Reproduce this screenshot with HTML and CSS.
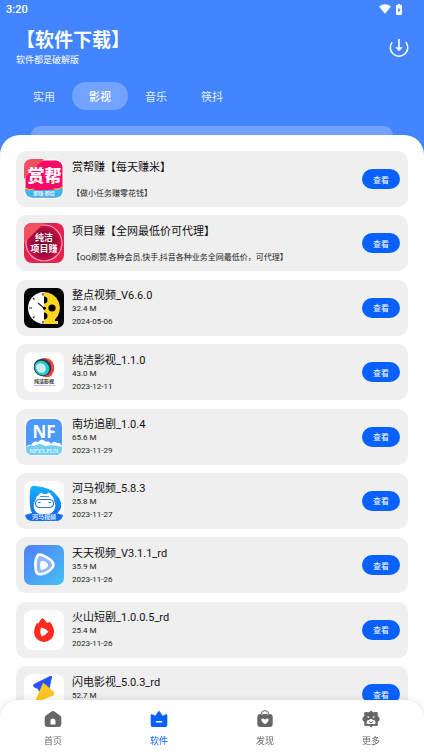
FILE: index.html
```html
<!DOCTYPE html>
<html lang="zh-CN">
<head>
<meta charset="utf-8">
<meta name="viewport" content="width=device-width, initial-scale=1">
<title>软件下载</title>
<link rel="stylesheet" href="styles.css">
</head>
<body>
<div class="app">
  <header class="header">
    <div class="status">
      <span>3:20</span>
      <div class="status-icons">
        <svg width="12" height="10" viewBox="0 0 12 10"><path d="M0 2.6Q6-2 12 2.6L6 9.8Z" fill="#fff"/></svg>
        <svg width="6" height="11" viewBox="0 0 6 11"><path d="M1.8 0h2.4v1H5q1 0 1 1v8q0 1-1 1H1q-1 0-1-1V2q0-1 1-1h.8z" fill="#fff"/><path d="M3.4 3 1.4 6.5h1.2V9l2-3.5H3.4z" fill="#4285ff"/></svg>
      </div>
    </div>
    <div class="heading">
      <div>
        <h1>【软件下载】</h1>
        <p>软件都是破解版</p>
      </div>
      <button class="download" aria-label="下载">
        <svg width="20" height="20" viewBox="0 0 20 20" fill="none" stroke="#fff" stroke-width="1.6"><path d="M2.800 4.600A8.700 8.700 0 1 0 17.200 4.600" stroke-linecap="round"/><path d="M10 1v10"/><path d="M6.200 9.200h7.600L10 13.200z" fill="#fff" stroke="none"/></svg>
      </button>
    </div>
    <nav class="tabs">
      <button>实用</button><button class="on">影视</button><button>音乐</button><button>筷抖</button>
    </nav>
    <div class="banner"></div>
  </header>

  <main class="sheet">
    <ul class="list">
      <li class="card">
        <svg class="logo" viewBox="0 0 40 40"><rect width="40" height="40" rx="8" fill="#fff"/><rect x="1.500" y="1.500" width="37" height="37" rx="7" fill="#ff0768"/><path d="M1.500 30q18 3 37-1v3q0 6.500-7 6.500H8.500q-7 0-7-6.500z" fill="#41b6ed"/><path d="M1 29q4 3 9 1M30 30q4 1 9-2" stroke="#ffcb36" fill="none"/><path d="M8 0h12L0 20V8q0-8 8-8z" fill="#f05060"/><text x="20.500" y="23" class="l-title">赏帮</text><circle cx="11" cy="23" r="1" fill="#ff9a20"/><circle cx="28" cy="23" r="1" fill="#ff9a20"/><text x="20" y="36" class="l-tiny">即赚·即提</text></svg>
        <div class="info"><h2>赏帮赚【每天赚米】</h2><p class="size"></p><p>【做小任务赚零花钱】</p></div>
        <button class="view">查看</button>
      </li>
      <li class="card">
        <svg class="logo" viewBox="0 0 40 40"><defs><radialGradient id="red"><stop offset=".35" stop-color="#85002e"/><stop offset=".75" stop-color="#b80d42"/><stop offset="1" stop-color="#e5224f"/></radialGradient></defs><rect width="40" height="40" rx="8" fill="url(#red)"/><circle cx="20" cy="20" r="18" fill="none" stroke="#ff9db8" stroke-width="1.200"/><path d="M8 0h12L0 20V8q0-8 8-8z" fill="#f05060"/><text x="20" y="18" class="l-mid">纯洁</text><text x="20" y="29" class="l-mid">项目赚</text></svg>
        <div class="info"><h2>项目赚【全网最低价可代理】</h2><p class="size"></p><p>【QQ刷赞,各种会员,快手,抖音各种业务全网最低价，可代理】</p></div>
        <button class="view">查看</button>
      </li>
      <li class="card">
        <svg class="logo" viewBox="0 0 40 40"><rect width="40" height="40" rx="7"/><path d="M20 4a16 16 0 0 0 0 32z" fill="#fff"/><path d="M20 4a16 16 0 0 1 11 27.500v1.500h3v3H20z" fill="#ffd51f"/><path d="M20 8.500a3.500 3.500 0 0 1 0 7zM20 24.500a3.500 3.500 0 0 1 0 7z"/><circle cx="28" cy="20" r="3.600"/><path d="M14 15l6 5M5 20h3M19 5v2.500M19 33v2.500M9 10l1.500 1.500M9 30l1.500-1.500" stroke="#222" stroke-width="1.200"/><circle cx="20.500" cy="20.300" r="1.500"/></svg>
        <div class="info"><h2>整点视频_V6.6.0</h2><p class="size">32.4 M</p><p>2024-05-06</p></div>
        <button class="view">查看</button>
      </li>
      <li class="card">
        <svg class="logo" viewBox="0 0 40 40"><rect width="40" height="40" rx="8" fill="#fff"/><path d="M12 9q10-6 16 0 5 8-1 15-6 3-10-1z" fill="#f5403e"/><ellipse cx="18.500" cy="15.500" rx="9" ry="8.500" transform="rotate(35 18.500 15.500)" fill="#263f48"/><ellipse cx="18" cy="16" rx="7.800" ry="6.800" transform="rotate(45 18 16)" fill="#21cbd2"/><ellipse cx="17" cy="16" rx="5.200" ry="4.500" transform="rotate(45 17 16)" fill="#c9eeee"/><text x="20" y="31" class="l-black">纯洁影视</text><path d="M10 33.500h21" stroke="#c9a5f6" stroke-width="1" stroke-dasharray="2 .5"/></svg>
        <div class="info"><h2>纯洁影视_1.1.0</h2><p class="size">43.0 M</p><p>2023-12-11</p></div>
        <button class="view">查看</button>
      </li>
      <li class="card">
        <svg class="logo" viewBox="0 0 40 40"><rect x="1" y="1" width="38" height="38" rx="8" fill="#fff"/><rect x="2" y="2" width="36" height="36" rx="7" fill="#4d98fc"/><path d="M2 30q2-3 5-2 3-5 7-3 4-5 8 0 3-2 5 2 3-4 6-1 3-1 5 3v3H2z" fill="#fff"/><path d="M2 30q5-3 8-1 6-4 11 0 9-2 17 1v2q0 6-7 6H9q-7 0-7-6z" fill="#74cff1"/><text x="20" y="21" class="l-nf">NF</text><text x="20" y="36" class="l-serif">NFYS.FUN</text></svg>
        <div class="info"><h2>南坊追剧_1.0.4</h2><p class="size">65.6 M</p><p>2023-11-29</p></div>
        <button class="view">查看</button>
      </li>
      <li class="card">
        <svg class="logo" viewBox="0 0 40 40"><defs><linearGradient id="hippo" x2="0" y2="1"><stop stop-color="#16b3f8"/><stop offset="1" stop-color="#1769f2"/></linearGradient></defs><rect width="40" height="40" rx="8" fill="#fff"/><path d="M6 10Q6 4 12 5 28 6 35 17q4 7 1 12-4 7-16 7-11 0-13-6-2-6-1-20z" fill="url(#hippo)"/><path d="M12 18q0-3 3-4l1-2q2-1 3 1h4q1-2 3-1l1 2q3 2 3 6 2 3 1 7-1 5-10 8-10-2-11-8-1-5 2-9z" fill="#fff"/><path d="M16 15.500h9" stroke="#4b92ee" fill="none"/><rect x="11.500" y="18.500" width="18" height="8" rx="4" fill="#fff" stroke="#2376d3" stroke-width="1.200"/><path d="M14 21.500h2.500M24.500 21.500H27" stroke="#2376d3"/><path d="M1 34l7-2q12 2 24 0l7 2q-1 6-7 6H9q-7 0-8-6z" fill="#176cf2"/><text x="20" y="38" class="l-label">河马视频</text></svg>
        <div class="info"><h2>河马视频_5.8.3</h2><p class="size">25.8 M</p><p>2023-11-27</p></div>
        <button class="view">查看</button>
      </li>
      <li class="card">
        <svg class="logo" viewBox="0 0 40 40"><defs><linearGradient id="sky" x2="1" y2="1"><stop stop-color="#5080fa"/><stop offset="1" stop-color="#45c0f2"/></linearGradient></defs><rect width="40" height="40" rx="7" fill="url(#sky)"/><path d="M14 10q2-1 6 1 7 3 9 7 1 3-1 5-4 5-10 6-5 1-6-3-2-10 2-16z" fill="#8db8fa" stroke="#fff" stroke-width="2.600"/><path d="M17 16q3-1 7 3v2q-3 4-7 4-2-5 0-9z" fill="#fff"/></svg>
        <div class="info"><h2>天天视频_V3.1.1_rd</h2><p class="size">35.9 M</p><p>2023-11-26</p></div>
        <button class="view">查看</button>
      </li>
      <li class="card">
        <svg class="logo" viewBox="0 0 40 40"><rect width="40" height="40" rx="8" fill="#fff"/><path d="M18.500 8q3 2 4.500 5l3-1q4 5 4 10a10 10 0 0 1-20 0q0-5 3-9l1.500.5q1-3.500 4-5.500z" fill="#ff2b1c"/><path d="M17 17.500q5 1 7.500 4-3 4-7 5-2-4-.5-9z" fill="#fff"/></svg>
        <div class="info"><h2>火山短剧_1.0.0.5_rd</h2><p class="size">25.4 M</p><p>2023-11-26</p></div>
        <button class="view">查看</button>
      </li>
      <li class="card">
        <svg class="logo" viewBox="0 0 40 40"><rect width="40" height="40" rx="8" fill="#fff"/><path d="M10 10 26 2q2-1 2 1l-3 14-9 1q-2-1-2-3-4-1-5-3 0-1 1-2z" fill="#2951ff"/><path d="M19 9l2 1 9 8q1 3-2 4l-15 6q-2-1-1-3z" fill="#fdc622"/></svg>
        <div class="info"><h2>闪电影视_5.0.3_rd</h2><p class="size">52.7 M</p><p>2023-11-26</p></div>
        <button class="view">查看</button>
      </li>
    </ul>
  </main>

  <nav class="bottom">
    <a href="#"><svg width="18" height="18" viewBox="0 0 18 18"><path d="M9 1q.8 0 1.500.5l5.500 4Q17.300 6.600 17.300 8v6q0 3-3 3H3.700q-3 0-3-3V8q0-1.400 1.300-2.500l5.500-4Q8.200 1 9 1z" fill="#666"/><path d="M6.500 14.500V11a2.500 2.500 0 0 1 5 0v3.500z" fill="#fff"/></svg>首页</a>
    <a href="#" class="on"><svg width="18" height="18" viewBox="0 0 18 18"><path d="M2 4.300 5.300 5.700 8.200 1.500q.8-1 1.600 0l2.900 4.200L16 4.300q1.300-.3 1.300 1V15q0 2-2 2H2.700q-2 0-2-2V5.300q0-1.300 1.300-1z" fill="#0861ff"/><path d="M6.500 11.700h5" stroke="#fff" stroke-width="1.600" stroke-linecap="round"/></svg>软件</a>
    <a href="#"><svg width="18" height="18" viewBox="0 0 18 18"><path d="M5.500 6V4.500a3.500 3.500 0 0 1 7 0V6" stroke="#666" stroke-width="1.600" fill="none"/><rect x="1.300" y="4" width="15.400" height="13" rx="3" fill="#666"/><path d="M6 5V4.500a3 3 0 0 1 6 0V5" stroke="#fff" stroke-width=".8" fill="none"/><path d="M9 14.200Q5 11.500 5.400 9.200 6 7.700 9 9.500q3-1.800 3.600-.3Q13 11.500 9 14.200z" fill="#fff"/></svg>发现</a>
    <a href="#"><svg width="18" height="18" viewBox="0 0 18 18"><path d="M9 .5l2 1.700 3.500-.3q1.200 0 1.300 1.300L15.700 6q2.200 1.500 2 3 0 1.500-2 3l.1 2.800q-.1 1.300-1.300 1.300L11 15.800 9 17.500l-2-1.700-3.500.3q-1.200 0-1.300-1.300L2.300 12q-2-1.500-2-3 0-1.500 2-3l-.1-2.800q.1-1.300 1.300-1.300L7 2.200z" fill="#666"/><path d="M4.500 13q0-3 2.500-3 2-2 4 0 2.500 0 2.500 3 0 1-1 1h-7q-1 0-1-1z" fill="#fff"/><path d="M5.500 6.500l1.500 1M12.500 6.500l-1.500 1" stroke="#fff" stroke-width="1.200"/><path d="M7 11.500q2 2.500 4 0" stroke="#666" fill="none"/></svg>更多</a>
  </nav>
</div>
</body>
</html>
```
FILE: styles.css
```css
* {
  box-sizing: border-box;
  margin: 0;
  padding: 0;
}

body {
  background: #4285ff;
  color: #111;
  font-family: Roboto, "Noto Sans CJK SC", sans-serif;
}

button {
  border: 0;
  background: none;
  color: inherit;
  font-family: inherit;
}

svg {
  display: block;
}

.app {
  display: flex;
  flex-direction: column;
  height: 100vh;
  overflow: hidden;
}

.header {
  color: #fff;
}

.status {
  display: flex;
  justify-content: space-between;
  align-items: center;
  height: 18px;
  padding: 0 22px 0 6px;
  font-size: 11px;
  font-weight: 500;
}

.status-icons {
  display: flex;
  align-items: center;
  gap: 5px;
}

.heading {
  display: flex;
  justify-content: space-between;
  align-items: center;
  padding: 11px 16px 0;
}

.heading h1 {
  font-size: 19px;
  font-weight: 700;
  line-height: 24px;
}

.heading p {
  font-size: 9px;
  line-height: 14px;
}

.download {
  margin-right: -1px;
}

.tabs {
  display: flex;
  padding: 15px 16px 16px;
}

.tabs button {
  height: 28px;
  padding: 0 17px;
  border-radius: 14px;
  font-size: 11px;
  opacity: 0.85;
}

.tabs .on {
  background: #73a3ff;
  font-weight: 500;
  opacity: 1;
}

.banner {
  height: 9px;
  margin: 0 31px;
  border-radius: 9px 9px 0 0;
  background: #73a3ff;
}

.sheet {
  display: flex;
  flex: 1;
  min-height: 0;
  padding: 16px 16px 32px;
  border-radius: 20px 20px 0 0;
  background: #fff;
  overflow: auto;
  scrollbar-width: none;
}

.list {
  display: grid;
  flex: 1;
  align-content: space-between;
  gap: 8px;
  min-width: 0;
  list-style: none;
}

.card {
  display: flex;
  align-items: center;
  gap: 8px;
  height: 56px;
  padding: 0 8px;
  border-radius: 10px;
  background: #efefef;
}

.logo {
  flex: none;
  width: 40px;
  height: 40px;
}

.info {
  flex: 1;
  min-width: 0;
  white-space: nowrap;
}

.info h2 {
  font-size: 11px;
  font-weight: 400;
  line-height: 16px;
}

.info p {
  color: #222;
  font-size: 8px;
  line-height: 10px;
}

.info .size {
  height: 10px;
  margin-bottom: 3px;
}

.view {
  width: 38px;
  height: 20px;
  border-radius: 10px;
  background: #0861ff;
  color: #fff;
  font-size: 8px;
}

.logo text {
  fill: #fff;
  font-weight: 700;
  text-anchor: middle;
}

.logo .l-title { font-size: 17px; font-weight: 900; }
.logo .l-mid { font-size: 9px; }
.logo .l-label { font-size: 6px; font-weight: 500; }
.logo .l-tiny { font-size: 5px; font-weight: 500; }
.logo .l-black { font-size: 5px; fill: #333; }
.logo .l-nf { font-size: 17px; font-family: "Open Sans", sans-serif; }
.logo .l-serif { font-size: 6px; font-weight: 400; font-family: "Liberation Serif", serif; }

.bottom {
  position: fixed;
  right: 0;
  bottom: 0;
  left: 0;
  display: grid;
  grid-template-columns: repeat(4, 1fr);
  height: 54px;
  padding-top: 10px;
  border-radius: 20px 20px 0 0;
  background: #fff;
  box-shadow: 0 0 8px rgba(0, 0, 0, 0.12);
}

.bottom a {
  display: flex;
  flex-direction: column;
  align-items: center;
  gap: 6px;
  color: #666;
  font-size: 9px;
  line-height: 14px;
  text-decoration: none;
}

.bottom .on {
  color: #0861ff;
}
```
